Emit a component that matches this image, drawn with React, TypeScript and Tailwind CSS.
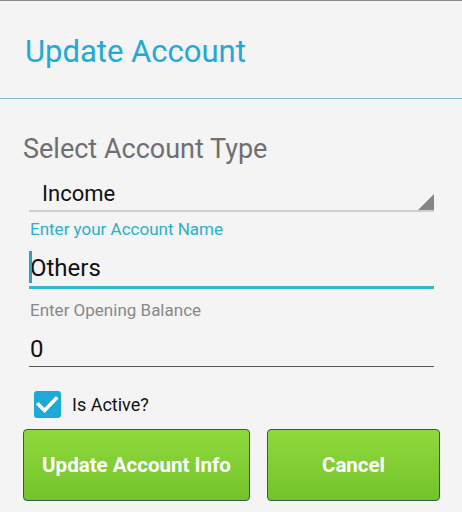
import React from "react";

export default function App() {
  return (
    <div
      className="w-[462px] h-[512px] bg-[#f4f4f4] overflow-hidden flex flex-col border-t border-[#8a8a8a]"
      style={{ fontFamily: "Roboto, 'Noto Sans', sans-serif" }}
    >
      <div className="h-[97px] pl-[25px] pt-[35px]">
        <div className="text-[31px] text-[#22a9d8] leading-none">Update Account</div>
      </div>
      <div className="h-px bg-[#7fb8cc]" />
      <div className="flex flex-col pl-[23px] pr-[22px]">
        <div className="mt-[37px] text-[27px] leading-none text-[#6f6f6f]">Select Account Type</div>
        <div className="relative ml-[6px] mr-[6px] mt-[20px] h-[29px] border-b-2 border-[#cfcfcf]">
          <div className="ml-[13px] text-[22px] leading-none text-[#111]">Income</div>
          <div
            className="absolute right-0 bottom-0 w-[16px] h-[16px] bg-[#858585]"
            style={{ clipPath: "polygon(100% 0, 100% 100%, 0 100%)" }}
          />
        </div>
        <div className="ml-[7px] mt-[9px] text-[17px] leading-none text-[#2ab0cb]">Enter your Account Name</div>
        <div className="relative ml-[6px] mr-[6px] mt-[10px] h-[41px] border-b-[3px] border-[#33b9cc]">
          <div className="absolute left-0 top-[3px] w-[3px] h-[32px] bg-[#2aa5c0]" />
          <div className="ml-[1px] mt-[8px] text-[24px] leading-none text-[#111]">Others</div>
        </div>
        <div className="ml-[7px] mt-[13px] text-[17px] leading-none text-[#888]">Enter Opening Balance</div>
        <div className="ml-[6px] mr-[6px] h-[48px] border-b border-[#555] pt-[18px]">
          <div className="ml-[1px] text-[24px] leading-none text-[#111]">0</div>
        </div>
        <div className="flex items-center mt-[24px] ml-[11px]">
          <div className="w-[27px] h-[27px] rounded-[3px] bg-[#1eaad8]">
            <svg width="27" height="27" viewBox="0 0 27 27">
              <path d="M4.5 13.5 L10.5 19.5 L22 7.5" stroke="#fff" strokeWidth="3.6" fill="none" strokeLinecap="square" />
            </svg>
          </div>
          <span className="ml-[11px] text-[18px] leading-none text-[#111]">Is Active?</span>
        </div>
        <div className="flex mt-[11px] gap-[17px]">
          <button className="shrink-0 w-[227px] h-[72px] rounded-[4px] border border-[#2f5d4a] text-white font-bold text-[20.5px] bg-gradient-to-b from-[#8fd93c] to-[#74c32c]">
            Update Account Info
          </button>
          <button className="shrink-0 w-[173px] h-[72px] rounded-[4px] border border-[#2f5d4a] text-white font-bold text-[20.5px] bg-gradient-to-b from-[#8fd93c] to-[#74c32c]">
            Cancel
          </button>
        </div>
      </div>
    </div>
  );
}
